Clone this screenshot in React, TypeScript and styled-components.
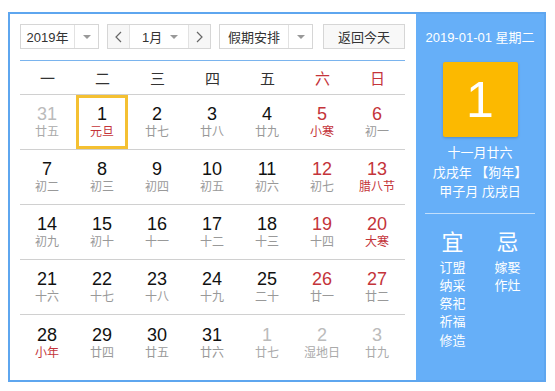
import styled, { createGlobalStyle } from "styled-components";

const GlobalStyle = createGlobalStyle`
  body {
    margin: 0;
    background: #fff;
    font-family: "Liberation Sans", "Noto Sans CJK SC", sans-serif;
  }
`;

type Day = {
  n: number;
  lunar: string;
  other?: boolean;
  weekend?: boolean;
  fest?: boolean;
  selected?: boolean;
};

const weeks: Day[][] = [
  [
    { n: 31, lunar: "廿五", other: true },
    { n: 1, lunar: "元旦", fest: true, selected: true },
    { n: 2, lunar: "廿七" },
    { n: 3, lunar: "廿八" },
    { n: 4, lunar: "廿九" },
    { n: 5, lunar: "小寒", weekend: true, fest: true },
    { n: 6, lunar: "初一", weekend: true },
  ],
  [
    { n: 7, lunar: "初二" },
    { n: 8, lunar: "初三" },
    { n: 9, lunar: "初四" },
    { n: 10, lunar: "初五" },
    { n: 11, lunar: "初六" },
    { n: 12, lunar: "初七", weekend: true },
    { n: 13, lunar: "腊八节", weekend: true, fest: true },
  ],
  [
    { n: 14, lunar: "初九" },
    { n: 15, lunar: "初十" },
    { n: 16, lunar: "十一" },
    { n: 17, lunar: "十二" },
    { n: 18, lunar: "十三" },
    { n: 19, lunar: "十四", weekend: true },
    { n: 20, lunar: "大寒", weekend: true, fest: true },
  ],
  [
    { n: 21, lunar: "十六" },
    { n: 22, lunar: "十七" },
    { n: 23, lunar: "十八" },
    { n: 24, lunar: "十九" },
    { n: 25, lunar: "二十" },
    { n: 26, lunar: "廿一", weekend: true },
    { n: 27, lunar: "廿二", weekend: true },
  ],
  [
    { n: 28, lunar: "小年", fest: true },
    { n: 29, lunar: "廿四" },
    { n: 30, lunar: "廿五" },
    { n: 31, lunar: "廿六" },
    { n: 1, lunar: "廿七", other: true },
    { n: 2, lunar: "湿地日", other: true },
    { n: 3, lunar: "廿九", other: true },
  ],
];

const weekdays = ["一", "二", "三", "四", "五", "六", "日"];

const Caret = () => (
  <svg width="8" height="4" viewBox="0 0 8 4">
    <path d="M0 0 L8 0 L4 4 Z" fill="#999" />
  </svg>
);

const Chevron = ({ dir }: { dir: "left" | "right" }) => (
  <svg width="7" height="12" viewBox="0 0 7 12">
    <path
      d={dir === "left" ? "M6 1 L1 6 L6 11" : "M1 1 L6 6 L1 11"}
      fill="none"
      stroke="#666"
      strokeWidth="1.2"
    />
  </svg>
);

const App = () => {
  return (
    <Page>
      <GlobalStyle />
      <Calendar>
        <Main>
          <Toolbar>
            <Select width={79}>
              <SelectLabel>2019年</SelectLabel>
              <SelectArrow>
                <Caret />
              </SelectArrow>
            </Select>
            <MonthGroup>
              <NavButton>
                <Chevron dir="left" />
              </NavButton>
              <MonthSelect>
                <span>1月</span>
                <Caret />
              </MonthSelect>
              <NavButton>
                <Chevron dir="right" />
              </NavButton>
            </MonthGroup>
            <Select width={94}>
              <SelectLabel>假期安排</SelectLabel>
              <SelectArrow>
                <Caret />
              </SelectArrow>
            </Select>
            <TodayButton>返回今天</TodayButton>
          </Toolbar>
          <Grid>
            <HeadRow>
              {weekdays.map((w, i) => (
                <HeadCell key={w} red={i >= 5}>
                  {w}
                </HeadCell>
              ))}
            </HeadRow>
            {weeks.map((week, wi) => (
              <WeekRow key={wi} last={wi === weeks.length - 1}>
                {week.map((d, di) => (
                  <Cell key={di} selected={d.selected}>
                    <DayNum tone={d.other ? "other" : d.weekend ? "red" : "normal"}>
                      {d.n}
                    </DayNum>
                    <Lunar tone={d.other ? "other" : d.fest ? "red" : "normal"}>
                      {d.lunar}
                    </Lunar>
                  </Cell>
                ))}
              </WeekRow>
            ))}
          </Grid>
        </Main>
        <Side>
          <SideDate>2019-01-01 星期二</SideDate>
          <BigDay>1</BigDay>
          <LunarInfo>
            <div>十一月廿六</div>
            <div>戊戌年 【狗年】</div>
            <div>甲子月 戊戌日</div>
          </LunarInfo>
          <SideRule />
          <Advice>
            <AdviceCol>
              <AdviceHead>宜</AdviceHead>
              <AdviceItem>订盟</AdviceItem>
              <AdviceItem>纳采</AdviceItem>
              <AdviceItem>祭祀</AdviceItem>
              <AdviceItem>祈福</AdviceItem>
              <AdviceItem>修造</AdviceItem>
            </AdviceCol>
            <AdviceCol>
              <AdviceHead>忌</AdviceHead>
              <AdviceItem>嫁娶</AdviceItem>
              <AdviceItem>作灶</AdviceItem>
            </AdviceCol>
          </Advice>
        </Side>
      </Calendar>
    </Page>
  );
};

export default App;

const Page = styled.div`
  padding: 12px 0 0 8px;
`;

const Calendar = styled.div`
  width: 538px;
  height: 370px;
  box-sizing: border-box;
  border: 2px solid #5ea6ef;
  display: flex;
`;

const Main = styled.div`
  width: 406px;
  box-sizing: border-box;
  padding: 10px 11px 0 10px;
  background: #fff;
`;

const Toolbar = styled.div`
  display: flex;
  height: 25px;
  gap: 8px;
  color: #333;
  font-size: 13px;
`;

const Select = styled.div<{ width: number }>`
  width: ${(p) => p.width}px;
  box-sizing: border-box;
  border: 1px solid #d6d6d6;
  display: flex;
  background: #fff;
`;

const SelectLabel = styled.div`
  flex: 1;
  display: flex;
  align-items: center;
  justify-content: center;
  border-right: 1px solid #e2e2e2;
`;

const SelectArrow = styled.div`
  width: 23px;
  display: flex;
  align-items: center;
  justify-content: center;
`;

const MonthGroup = styled.div`
  width: 104px;
  box-sizing: border-box;
  border: 1px solid #d6d6d6;
  display: flex;
`;

const NavButton = styled.div`
  width: 21px;
  display: flex;
  align-items: center;
  justify-content: center;
  background: #f7f7f7;
`;

const MonthSelect = styled.div`
  flex: 1;
  display: flex;
  align-items: center;
  justify-content: space-between;
  padding: 0 10px 0 12px;
  border-left: 1px solid #e2e2e2;
  border-right: 1px solid #e2e2e2;
`;

const TodayButton = styled.div`
  margin-left: 2px;
  width: 82px;
  box-sizing: border-box;
  border: 1px solid #d6d6d6;
  background: #f8f8f8;
  display: flex;
  align-items: center;
  justify-content: center;
`;

const Grid = styled.div`
  margin-top: 11px;
  border-top: 1px solid #7ab4ee;
`;

const HeadRow = styled.div`
  display: grid;
  grid-template-columns: repeat(7, 55px);
  height: 33px;
  border-bottom: 1px solid #d0d0d0;
`;

const HeadCell = styled.div<{ red?: boolean }>`
  display: flex;
  align-items: center;
  justify-content: center;
  font-size: 15px;
  color: ${(p) => (p.red ? "#c4343a" : "#333")};
`;

const WeekRow = styled.div<{ last?: boolean }>`
  display: grid;
  grid-template-columns: repeat(7, 55px);
  height: 55px;
  box-sizing: border-box;
  border-bottom: ${(p) => (p.last ? "none" : "1px solid #d0d0d0")};
`;

const Cell = styled.div<{ selected?: boolean }>`
  display: flex;
  flex-direction: column;
  align-items: center;
  justify-content: center;
  margin: 0 2px 0 1px;
  box-sizing: border-box;
  border: 3px solid ${(p) => (p.selected ? "#f4c032" : "transparent")};
`;

const toneColor = {
  normal: "#111",
  red: "#c4343a",
  other: "#bbb",
};

const DayNum = styled.div<{ tone: "normal" | "red" | "other" }>`
  font-size: 18px;
  line-height: 20px;
  color: ${(p) => toneColor[p.tone]};
`;

const Lunar = styled.div<{ tone: "normal" | "red" | "other" }>`
  font-size: 12px;
  line-height: 16px;
  color: ${(p) =>
    p.tone === "red" ? "#c4343a" : p.tone === "other" ? "#aaa" : "#999"};
`;

const Side = styled.div`
  flex: 1;
  background: #66aff8;
  color: #fff;
  display: flex;
  flex-direction: column;
  align-items: center;
  padding-top: 15px;
`;

const SideDate = styled.div`
  font-size: 13px;
  line-height: 18px;
`;

const BigDay = styled.div`
  margin-top: 15px;
  width: 75px;
  height: 75px;
  border-radius: 2px;
  background: #fcb900;
  box-shadow: 0 1px 3px rgba(0, 0, 0, 0.2);
  display: flex;
  align-items: center;
  justify-content: center;
  font-size: 50px;
  line-height: 1;
`;

const LunarInfo = styled.div`
  margin-top: 6px;
  font-size: 13px;
  line-height: 19.5px;
  text-align: center;
`;

const SideRule = styled.div`
  margin-top: 11px;
  width: 110px;
  height: 1px;
  background: rgba(255, 255, 255, 0.6);
`;

const Advice = styled.div`
  display: flex;
  width: 110px;
  margin-top: 17px;
`;

const AdviceCol = styled.div`
  flex: 1;
  display: flex;
  flex-direction: column;
  align-items: center;
`;

const AdviceHead = styled.div`
  font-size: 22px;
  line-height: 24px;
  margin-bottom: 4px;
`;

const AdviceItem = styled.div`
  font-size: 13px;
  line-height: 18.3px;
`;
